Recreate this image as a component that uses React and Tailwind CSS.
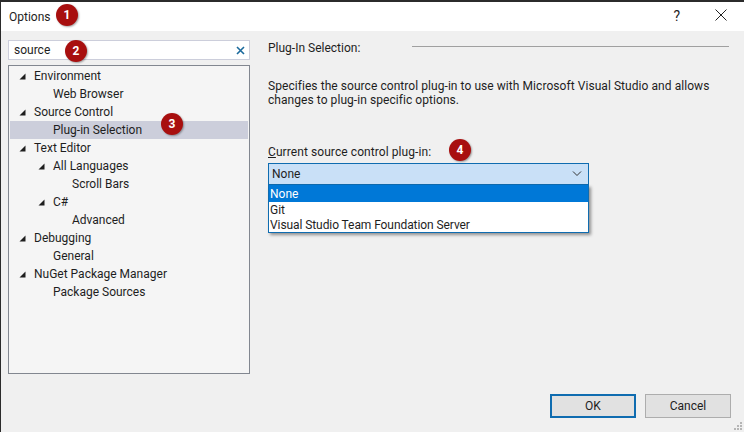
import React from 'react';

const treeRows = [
    { label: 'Environment', depth: 0, arrow: true },
    { label: 'Web Browser', depth: 1 },
    { label: 'Source Control', depth: 0, arrow: true },
    { label: 'Plug-in Selection', depth: 1, selected: true },
    { label: 'Text Editor', depth: 0, arrow: true },
    { label: 'All Languages', depth: 1, arrow: true },
    { label: 'Scroll Bars', depth: 2 },
    { label: 'C#', depth: 1, arrow: true },
    { label: 'Advanced', depth: 2 },
    { label: 'Debugging', depth: 0, arrow: true },
    { label: 'General', depth: 1 },
    { label: 'NuGet Package Manager', depth: 0, arrow: true },
    { label: 'Package Sources', depth: 1 },
];

const depthPadding = ['pl-[24px]', 'pl-[43px]', 'pl-[62px]'];

function Badge({ number, className }) {
    return (
        <div
            className={`absolute w-[22px] h-[22px] rounded-full bg-[#a80f0f] text-white text-[12px] font-bold flex items-center justify-center shadow-[1px_1px_2px_rgba(0,0,0,0.35)] ${className}`}
        >
            {number}
        </div>
    );
}

function TreeRow({ row }) {
    return (
        <div
            className={`relative h-[18px] leading-[18px] whitespace-nowrap ${depthPadding[row.depth]} ${
                row.selected ? 'bg-[#cccedb]' : ''
            }`}
        >
            {row.arrow && (
                <svg
                    className="absolute top-[6px]"
                    style={{ left: 9 + row.depth * 19 }}
                    width="7"
                    height="7"
                    viewBox="0 0 7 7"
                >
                    <path d="M6.5 0.5 V6.5 H0.5 Z" fill="#1e1e1e" />
                </svg>
            )}
            {row.label}
        </div>
    );
}

function App() {
    return (
        <div
            className="relative w-[744px] h-[432px] overflow-hidden bg-[#f0f0f0] text-[#1e1e1e] text-[12px] border-t-2 border-l border-[#2b2b2b] flex flex-col"
            style={{ fontFamily: 'Roboto, "Open Sans", sans-serif' }}
        >
            <div className="h-[29px] shrink-0 bg-white flex items-center pl-[8px] pr-[17px]">
                <span className="text-[#1e1e1e]">Options</span>
                <span className="ml-auto mr-[35px] text-[14px]">?</span>
                <svg width="12" height="12" viewBox="0 0 12 12" className="-mt-[3px]">
                    <path d="M0.5 0.5 L11.5 11.5 M11.5 0.5 L0.5 11.5" stroke="#222" strokeWidth="1" fill="none" />
                </svg>
            </div>

            <div className="flex-1 flex pl-[7px] pr-[15px] pt-[9px]">
                <div className="w-[242px] shrink-0 flex flex-col">
                    <div className="h-[20px] bg-white border border-[#cccedb] flex items-center pl-[5px] pr-[4px]">
                        <span>source</span>
                        <svg className="ml-auto" width="9" height="9" viewBox="0 0 9 9">
                            <path d="M1 1 L8 8 M8 1 L1 8" stroke="#1b6a9c" strokeWidth="1.6" fill="none" />
                        </svg>
                    </div>
                    <div className="mt-[5px] h-[309px] bg-[#f5f5f5] border border-[#828790] p-[1px]">
                        {treeRows.map((row) => (
                            <TreeRow key={row.label} row={row} />
                        ))}
                    </div>
                </div>

                <div className="flex-1 pl-[18px] flex flex-col">
                    <div className="flex items-center h-[14px] mt-[1px]">
                        <span className="w-[144px] shrink-0">Plug-In Selection:</span>
                        <div className="flex-1 border-t border-[#a0a0a0] -mt-[4px]"></div>
                    </div>
                    <p className="mt-[24px] leading-[14px] whitespace-nowrap tracking-[0.06px]">
                        Specifies the source control plug-in to use with Microsoft Visual Studio and allows
                        <br />
                        changes to plug-in specific options.
                    </p>
                    <div className="mt-[37px] leading-[16px] tracking-[0.08px]">
                        <span className="underline">C</span>urrent source control plug-in:
                    </div>
                    <div className="relative mt-[3px] w-[321px]">
                        <div className="h-[22px] bg-[#c9e0f7] border border-[#0f6cb0] flex items-center pl-[3px] pr-[6px]">
                            <span>None</span>
                            <svg className="ml-auto" width="10" height="6" viewBox="0 0 10 6">
                                <path d="M1 0.5 L5 4.5 L9 0.5" stroke="#333" strokeWidth="1" fill="none" />
                            </svg>
                        </div>
                        <div className="absolute left-0 top-[22px] w-full h-[48px] bg-white border border-[#0f6cb0] border-t-0 shadow-[2px_2px_3px_rgba(0,0,0,0.4)]">
                            <div className="bg-[#0078d7] text-white pl-[1px] pt-[2px] h-[17px] leading-[15px]">None</div>
                            <div className="pl-[1px] pt-[1px] h-[15px] leading-[14px]">Git</div>
                            <div className="pl-[1px] pt-[1px] h-[15px] leading-[14px] tracking-[-0.08px]">
                                Visual Studio Team Foundation Server
                            </div>
                        </div>
                    </div>
                </div>
            </div>

            <div className="absolute left-[549px] top-[392px] flex gap-[9px]">
                <button className="w-[86px] h-[24px] bg-[#e1e1e1] border-2 border-[#0f6cb0]">OK</button>
                <button className="w-[86px] h-[24px] bg-[#e1e1e1] border border-[#adadad]">Cancel</button>
            </div>

            <svg className="absolute right-[1px] bottom-[1px]" width="10" height="10" viewBox="0 0 10 10">
                <path d="M7 1h2v2h-2z M4 4h2v2h-2z M7 4h2v2h-2z M1 7h2v2h-2z M4 7h2v2h-2z M7 7h2v2h-2z" fill="#b5b5b5" />
            </svg>

            <Badge number="1" className="left-[55px] top-[2px]" />
            <Badge number="2" className="left-[64px] top-[38px]" />
            <Badge number="3" className="left-[160px] top-[111px]" />
            <Badge number="4" className="left-[448px] top-[137px]" />
        </div>
    );
}

export default App;
